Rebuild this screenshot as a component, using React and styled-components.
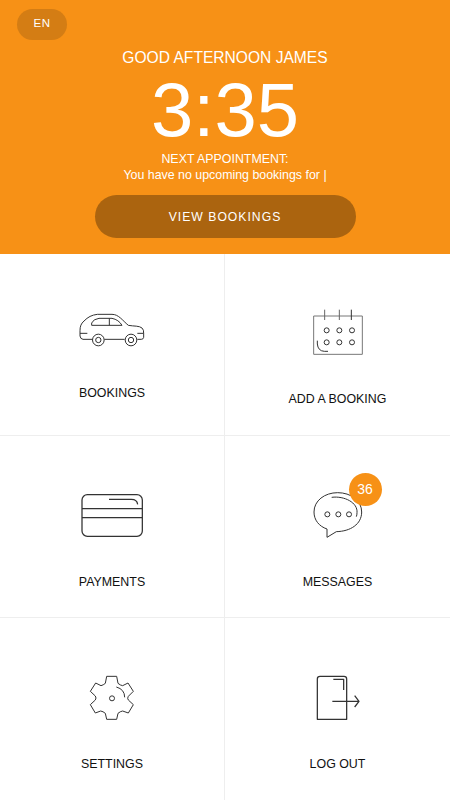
import styled, { createGlobalStyle } from 'styled-components';

const tiles = [
    { label: 'BOOKINGS', Icon: CarIcon, top: 46, gap: 25 },
    { label: 'ADD A BOOKING', Icon: CalendarIcon, top: 46, gap: 26 },
    { label: 'PAYMENTS', Icon: CardIcon, top: 44, gap: 24 },
    { label: 'MESSAGES', Icon: ChatIcon, top: 29, gap: 29, count: 36 },
    { label: 'SETTINGS', Icon: GearIcon, top: 47, gap: 26 },
    { label: 'LOG OUT', Icon: LogOutIcon, top: 47, gap: 26 },
];

export default function App() {
    return (
        <Page>
            <GlobalStyle />
            <Header>
                <LanguageButton>EN</LanguageButton>
                <Greeting>GOOD AFTERNOON JAMES</Greeting>
                <Clock>3:35</Clock>
                <Appointment>
                    <span>NEXT APPOINTMENT:</span>
                    <span>You have no upcoming bookings for |</span>
                </Appointment>
                <ViewButton>VIEW BOOKINGS</ViewButton>
            </Header>
            <Menu>
                {tiles.map(({ label, Icon, top, gap, count }) => (
                    <Tile key={label} $top={top}>
                        <IconBox $gap={gap}>
                            <Icon />
                            {count && <Badge>{count}</Badge>}
                        </IconBox>
                        <span>{label}</span>
                    </Tile>
                ))}
            </Menu>
        </Page>
    );
}

function CarIcon() {
    return (
        <LineIcon width="84" height="60" viewBox="0 0 252 180">
            <path d="M67 118H39Q31 117 30 108V92C30 79 33 71 42 63C54 51 65 45 82 43H126C146 43 157 61 175 76C192 79 208 77 216 84Q222 89 221 101V112Q220 118 214 118H202" />
            <path d="M103 118H164M30 100H52M202 100H221" />
            <path d="M65 76V69Q70 57 87 55H126Q146 59 156 76ZM118 55V76" />
            <circle cx="85" cy="120" r="17.5" />
            <circle cx="85" cy="120" r="8" />
            <circle cx="183" cy="120" r="17.5" />
            <circle cx="183" cy="120" r="8" />
        </LineIcon>
    );
}

function CalendarIcon() {
    return (
        <LineIcon width="75" height="65" viewBox="0 0 225 195">
            <path stroke="#777" d="M41 48H187V163H41Z" />
            <path stroke="#666" d="M74 29V60M118 29V60" />
            <path d="M154 29V60M52 122V132Q54 153 73 154H84" />
            {[91, 127].map((y) =>
                [80, 118, 156].map((x) => <circle key={`${x}-${y}`} cx={x} cy={y} r="7.5" />)
            )}
        </LineIcon>
    );
}

function CardIcon() {
    return (
        <LineIcon width="84" height="70" viewBox="0 0 252 210" $stroke={3.8}>
            <rect x="36" y="44" width="181" height="125" rx="16" />
            <path d="M36 86H217M36 113H217" />
            <path d="M117 58H184Q201 58 203 73" />
        </LineIcon>
    );
}

function ChatIcon() {
    return (
        <LineIcon width="75" height="80" viewBox="0 0 225 240">
            <path d="M81 192V217L109 200C151 199 185 178 185 141C185 107 153 83 113 83C74 83 42 107 42 141C42 165 57 184 81 192Z" />
            <path d="M95 97C133 92 174 113 171 143Q171 150 169 155" />
            <circle cx="82" cy="148" r="7.5" />
            <circle cx="115" cy="148" r="7.5" />
            <circle cx="147" cy="148" r="7.5" />
        </LineIcon>
    );
}

function GearIcon() {
    return (
        <LineIcon width="64" height="65" viewBox="0 0 192 195">
            <path d="M80 34H110L114 55Q121 61 128 62L144 54L160 79L145 94Q141 100 145 105L160 119L145 144L128 138Q121 139 114 145L110 163H80L76 145Q69 139 62 138L46 144L31 119L46 105Q50 99 46 93L31 79L47 54L63 62Q70 60 76 55Z" />
            <circle cx="96" cy="100" r="7.5" />
            <path d="M109 66Q134 73 134 97" />
        </LineIcon>
    );
}

function LogOutIcon() {
    return (
        <LineIcon width="65" height="65" viewBox="0 0 195 195" $stroke={3.8}>
            <path d="M37 163V42Q37 34 45 34H117Q125 34 125 42V163Z" />
            <path d="M85 43H116V75M82 109H162M149 92L162 109L149 126" />
        </LineIcon>
    );
}

const GlobalStyle = createGlobalStyle`
    * {
        box-sizing: border-box;
    }
    body {
        margin: 0;
        background-color: #ffffff;
        font-family: "Liberation Sans", Arial, sans-serif;
    }
    button {
        border: none;
        color: #ffffff;
        font-family: inherit;
        padding: 0;
    }
`
const Page = styled.div`
    display: flex;
    flex-direction: column;
    height: 800px;
    overflow: hidden;
`
const Header = styled.header`
    display: flex;
    flex-direction: column;
    align-items: center;
    height: 254px;
    flex-shrink: 0;
    padding-top: 9px;
    background-color: #f79116;
    color: #ffffff;
`
const LanguageButton = styled.button`
    align-self: flex-start;
    width: 50px;
    height: 31px;
    margin-left: 17px;
    padding-bottom: 3px;
    border-radius: 16px;
    background-color: #d47d14;
    font-size: 11.5px;
    letter-spacing: 0.6px;
`
const Greeting = styled.h1`
    margin: 9px 0 0;
    font-size: 15.6px;
    font-weight: normal;
    line-height: 18px;
`
const Clock = styled.div`
    margin-top: 5px;
    font-size: 76px;
    line-height: 76px;
`
const Appointment = styled.div`
    display: flex;
    flex-direction: column;
    align-items: center;
    margin-top: 3px;
    font-size: 12.4px;
    line-height: 16px;
`
const ViewButton = styled.button`
    width: 261px;
    height: 43px;
    margin-top: 12px;
    border-radius: 22px;
    background-color: #ab640f;
    font-size: 12.2px;
    letter-spacing: 1px;
`
const Menu = styled.main`
    display: grid;
    grid-template-columns: 225px 225px;
    grid-template-rows: 182px 182px 182px;
`
const Tile = styled.div`
    display: flex;
    flex-direction: column;
    align-items: center;
    padding-top: ${({ $top }) => $top}px;
    border-bottom: 1px solid #eeeeee;
    color: #111111;
    font-size: 12.4px;
    line-height: 16px;

    &:nth-child(odd) {
        border-right: 1px solid #eeeeee;
    }
    &:nth-last-child(-n + 2) {
        border-bottom: none;
    }
`
const IconBox = styled.div`
    position: relative;
    display: flex;
    margin-bottom: ${({ $gap }) => $gap}px;
`
const LineIcon = styled.svg`
    fill: none;
    stroke: #333333;
    stroke-width: ${({ $stroke }) => $stroke || 3};
    stroke-linejoin: round;
`
const Badge = styled.div`
    position: absolute;
    top: 8px;
    left: 48.5px;
    display: flex;
    align-items: center;
    justify-content: center;
    width: 33px;
    height: 33px;
    padding-bottom: 1px;
    border-radius: 50%;
    background-color: #f79116;
    color: #ffffff;
    font-size: 14px;
`
